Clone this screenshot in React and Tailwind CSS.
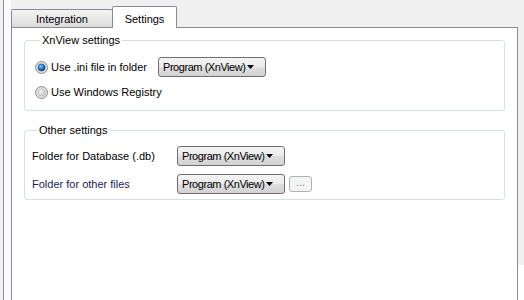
function Radio({ checked, id }) {
  return (
    <svg width="13" height="13" viewBox="0 0 13 13" className="shrink-0">
      <defs>
        <radialGradient id={`ro-${id}`} cx="50%" cy="50%" r="50%">
          <stop offset="0%" stopColor="#ffffff" />
          <stop offset="100%" stopColor="#d6d6d6" />
        </radialGradient>
        <radialGradient id={`ri-${id}`} cx="40%" cy="35%" r="60%">
          {checked ? (
            <>
              <stop offset="0%" stopColor="#8fd0ff" />
              <stop offset="55%" stopColor="#2d7fd6" />
              <stop offset="100%" stopColor="#0d3f8a" />
            </>
          ) : (
            <>
              <stop offset="0%" stopColor="#f7f7f7" />
              <stop offset="100%" stopColor="#c9c9c9" />
            </>
          )}
        </radialGradient>
      </defs>
      <circle cx="6.5" cy="6.5" r="6" fill={`url(#ro-${id})`} stroke="#8e8f8f" />
      <circle cx="6.5" cy="6.5" r="3.6" fill={`url(#ri-${id})`} stroke={checked ? '#1c4f8c' : '#b5b5b5'} strokeWidth="0.6" />
    </svg>
  );
}

function Dropdown() {
  return (
    <div className="flex h-[20px] w-[108px] shrink-0 items-center rounded-[3px] border border-[#707070] bg-[linear-gradient(#f3f3f3_0%,#ebebeb_50%,#dfdfdf_50%,#d2d2d2_100%)] pl-[4px] text-black">
      <span className="whitespace-nowrap tracking-[-0.45px]">Program (XnView)</span>
      <svg width="7" height="4" viewBox="0 0 7 4" className="ml-auto mr-[11px] shrink-0">
        <path d="M0 0h7L3.5 4z" fill="#000" />
      </svg>
    </div>
  );
}

function GroupBox({ title, className, children }) {
  return (
    <fieldset className={`rounded-[3px] border border-[#d5dfe5] ${className}`}>
      <legend className="ml-[5px] px-[2px] leading-[13px] text-black">{title}</legend>
      {children}
    </fieldset>
  );
}

export default function App() {
  return (
    <div
      className="flex h-[300px] w-[524px] overflow-hidden bg-[#f0f0f0] text-[11px] text-black"
      style={{ fontFamily: '"Liberation Sans", Arial, sans-serif' }}
    >
      <div className="w-[3px]" />
      <div className="w-px bg-[#8e9096]" />
      <div className="w-[7px] bg-[#fafafa]" />

      <div className="flex w-[507px] flex-col">
        <div className="flex h-[27px] items-end">
          <div className="flex h-[18px] w-[102px] items-center justify-center rounded-t-[2px] border border-b-0 border-[#898c95] bg-[linear-gradient(#f4f4f4,#dcdcdc)] pt-px">
            Integration
          </div>
          <div className="relative z-10 -mb-px -ml-px flex h-[22px] w-[65px] items-start justify-center rounded-t-[2px] border border-b-0 border-[#898c95] bg-white pt-[4px]">
            Settings
          </div>
        </div>

        <div className="flex-1 border border-b-0 border-[#898c95] bg-white px-[12px] pt-[6px]">
          <GroupBox title="XnView settings" className="pb-[8px] pl-[10px]">
            <div className="mt-[10px] flex h-[20px] items-center">
              <Radio checked id="a" />
              <span className="ml-[3px] whitespace-nowrap">Use .ini file in folder</span>
              <div className="ml-[11px]">
                <Dropdown />
              </div>
            </div>
            <div className="mt-[5px] flex h-[20px] items-center">
              <Radio id="b" />
              <span className="ml-[3px]">Use Windows Registry</span>
            </div>
          </GroupBox>

          <GroupBox title="Other settings" className="mt-[13px] pb-[5px] pl-[7px]">
            <div className="mt-[9px] grid grid-cols-[145px_auto] items-center gap-y-[8px]">
              <span className="whitespace-nowrap">Folder for Database (.db)</span>
              <Dropdown />
              <span className="whitespace-nowrap text-[#1b1b60]">Folder for other files</span>
              <div className="flex items-center gap-[4px]">
                <Dropdown />
                <div className="flex h-[16px] w-[23px] items-center justify-center rounded-[3px] border border-[#adb2b5] bg-[#f4f4f4] pb-[3px] text-[#838383]">
                  ...
                </div>
              </div>
            </div>
          </GroupBox>
        </div>
      </div>

      <div className="flex w-[6px] flex-col">
        <div className="h-[265px] bg-[#f0f0f0]" />
        <div className="flex-1 bg-white" />
      </div>
    </div>
  );
}
